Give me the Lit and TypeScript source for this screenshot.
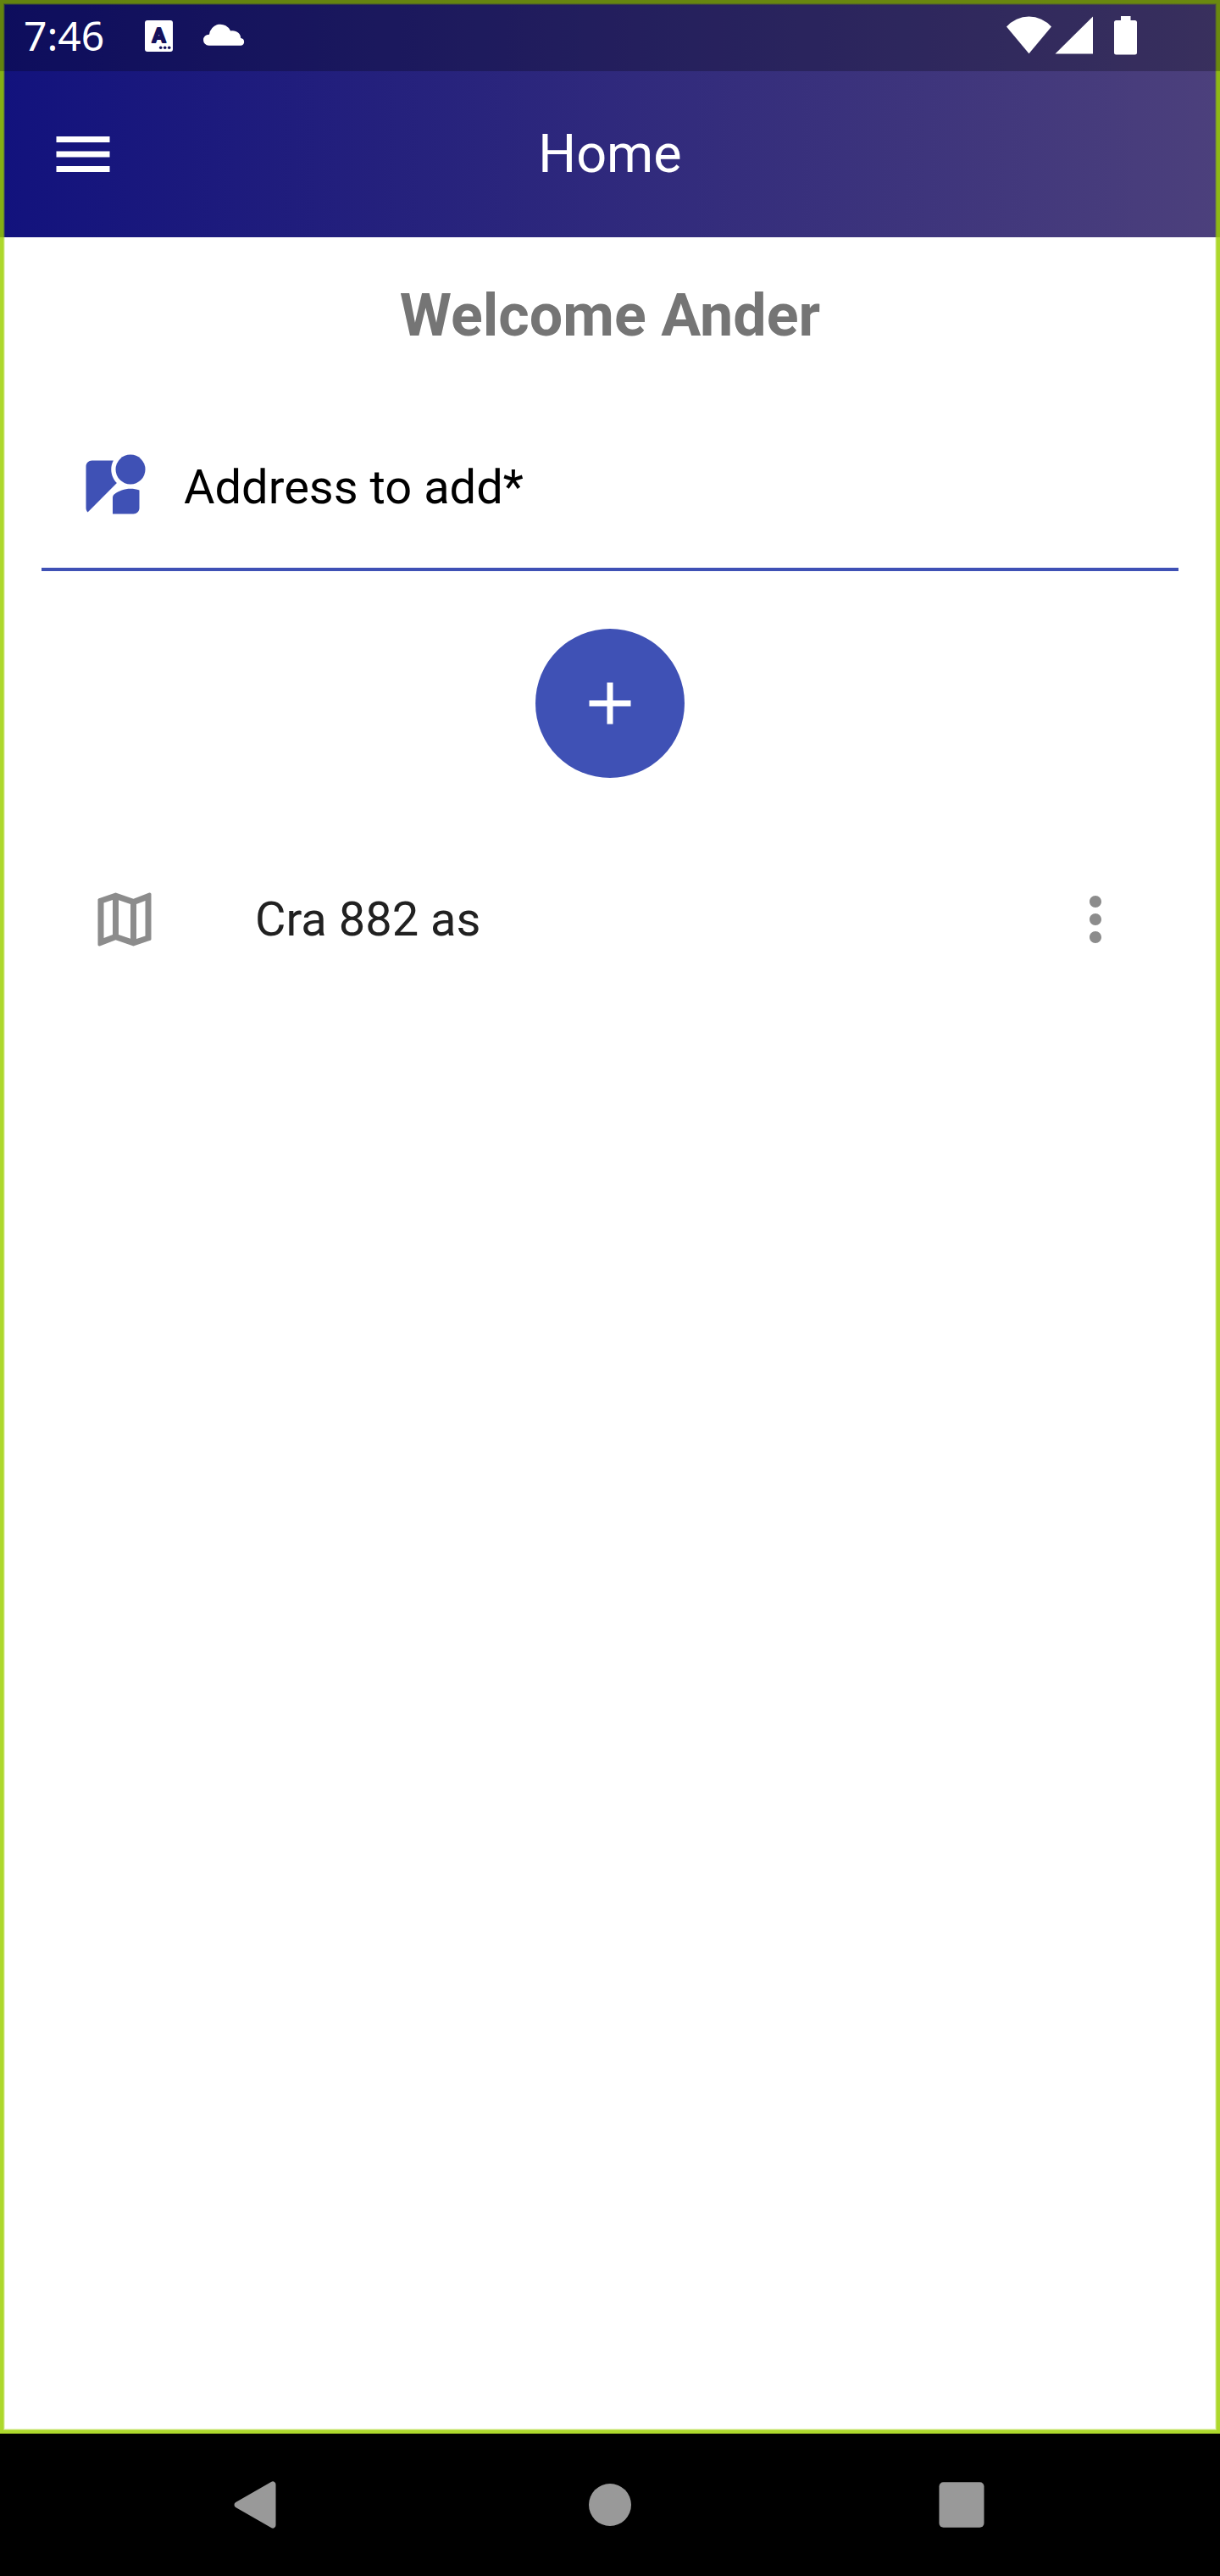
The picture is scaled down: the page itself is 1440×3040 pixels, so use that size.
import { LitElement, html, css, svg } from "lit";
import { customElement, state } from "lit/decorators.js";

const streetview = svg`
  <path d="M12.56 14.33c-.34.27-.56.7-.56 1.17V21h7c1.1 0 2-.9 2-2v-5.98c-.94-.33-1.95-.52-3-.52-2.03 0-3.93.7-5.44 1.83z"/>
  <circle cx="18" cy="6" r="5"/>
  <path d="M11.5 6c0-1.08.27-2.1.74-3H5c-1.1 0-2 .9-2 2v14c0 .55.23 1.05.59 1.41l9.82-9.82C12.23 9.42 11.5 7.8 11.5 6z"/>`;
const mapOutline = svg`<path d="M20.5 3l-.16.03L15 5.1 9 3 3.36 4.9c-.21.07-.36.25-.36.48V20.5c0 .28.22.5.5.5l.16-.03L9 18.9l6 2.1 5.64-1.9c.21-.07.36-.25.36-.48V3.5c0-.28-.22-.5-.5-.5zM10 5.47l4 1.4v11.66l-4-1.4V5.47zm-5 .99l3-1.01v11.7l-3 1.16V6.46zm14 11.08l-3 1.01V6.86l3-1.16v11.84z"/>`;
const moreVert = svg`<path d="M12 8c1.1 0 2-.9 2-2s-.9-2-2-2-2 .9-2 2 .9 2 2 2zm0 2c-1.1 0-2 .9-2 2s.9 2 2 2 2-.9 2-2-.9-2-2-2zm0 6c-1.1 0-2 .9-2 2s.9 2 2 2 2-.9 2-2-.9-2-2-2z"/>`;
const menu = svg`<path d="M3 18h18v-2H3v2zm0-5h18v-2H3v2zm0-7v2h18V6H3z"/>`;
const plus = svg`<path d="M19 13h-6v6h-2v-6H5v-2h6V5h2v6h6v2z"/>`;

@customElement("app-root")
export class AppRoot extends LitElement {
  @state() private addresses = ["Cra 882 as"];

  static styles = css`
    :host {
      display: block;
      font-family: Roboto, "Liberation Sans", sans-serif;
      background: #fff;
    }
    .device {
      display: flex;
      flex-direction: column;
      min-height: 100vh;
    }
    .screen {
      flex: 1;
      display: flex;
      flex-direction: column;
      position: relative;
    }
    .outline {
      position: absolute;
      inset: 0;
      pointer-events: none;
      box-shadow: inset 0 0 0 4px rgba(157, 208, 0, 0.57),
        inset 0 0 0 5px rgba(157, 208, 0, 0.5),
        inset 0 0 0 6px rgba(157, 208, 0, 0.2);
    }
    .top {
      background: linear-gradient(90deg, rgb(18, 18, 125), rgb(76, 64, 124));
      color: #fff;
    }
    .status {
      position: relative;
      z-index: 1;
      display: flex;
      align-items: center;
      height: 84px;
      padding: 0 98px 0 28px;
      box-sizing: border-box;
      background: rgba(0, 0, 0, 0.25);
    }
    .clock {
      font: 48px/56px "Noto Sans", sans-serif;
      margin-right: 47px;
    }
    .notes,
    .signals {
      display: block;
      height: 84px;
      fill: currentColor;
    }
    .notes {
      width: 120px;
      margin-right: auto;
    }
    .signals {
      width: 160px;
    }
    .badge {
      fill: #15125c;
      stroke: #15125c;
      stroke-width: 2;
      stroke-linejoin: round;
      font: 700 24px Roboto, sans-serif;
      text-anchor: middle;
    }
    .dots {
      fill: #15125c;
    }
    .bar {
      display: grid;
      grid-template-columns: 1fr auto 1fr;
      align-items: center;
      height: 196px;
      padding: 0 56px;
    }
    .bar h1 {
      margin: 0;
      font-size: 63px;
      line-height: 84px;
      font-weight: 400;
    }
    button {
      display: flex;
      align-items: center;
      justify-content: center;
      padding: 0;
      border: 0;
      background: none;
      color: inherit;
      cursor: pointer;
    }
    .bar button {
      justify-self: start;
    }
    .icon {
      display: block;
      flex: none;
      width: 84px;
      height: 84px;
      fill: currentColor;
    }
    main {
      display: flex;
      flex-direction: column;
      padding: 50px 49px;
    }
    h2 {
      margin: 0 0 66px;
      font-size: 70px;
      line-height: 84px;
      font-weight: 700;
      text-align: center;
      color: #757575;
    }
    .field {
      display: flex;
      align-items: center;
      gap: 42px;
      height: 190px;
      padding: 0 42px;
      border-bottom: 4px solid #3f51b5;
      color: #3f51b5;
    }
    .field input {
      flex: 1;
      min-width: 0;
      height: 84px;
      padding: 0;
      border: 0;
      outline: none;
      background: none;
      font: 56px/84px Roboto, "Liberation Sans", sans-serif;
      color: #000;
    }
    .field input::placeholder {
      color: #000;
      opacity: 1;
    }
    .add {
      align-self: center;
      width: 176px;
      height: 176px;
      margin: 68px 0 83px;
      border-radius: 50%;
      background: #3f51b5;
      color: #fff;
    }
    ul {
      margin: 0;
      padding: 0;
      list-style: none;
    }
    li {
      display: flex;
      align-items: center;
      height: 168px;
      padding: 0 56px;
      color: #8c8c8c;
    }
    .address {
      flex: 1;
      margin-left: 112px;
      font-size: 56px;
      line-height: 84px;
      color: #212121;
    }
    .nav {
      display: grid;
      grid-template-columns: repeat(3, 1fr);
      justify-items: center;
      align-items: center;
      height: 168px;
      padding: 0 98px;
      background: #000;
      color: #999;
    }
  `;

  private icon(shape: unknown) {
    return html`<svg class="icon" viewBox="0 0 24 24" aria-hidden="true">${shape}</svg>`;
  }

  render() {
    return html`
      <div class="device">
        <div class="screen">
          <header class="top">
            <div class="status">
              <span class="clock">7:46</span>
              <svg class="notes" viewBox="170 0 120 84" aria-hidden="true">
                <rect x="171" y="24" width="33" height="37" rx="3" />
                <text class="badge" x="187.5" y="50">A</text>
                <g class="dots">
                  <circle cx="189.7" cy="56.3" r="1.8" />
                  <circle cx="194.7" cy="56.3" r="1.8" />
                  <circle cx="199.7" cy="56.3" r="1.8" />
                </g>
                <path d="M246.5 53.7a6.5 6.5 0 0 1 0-13h.5a13.2 13.2 0 0 1 25.2-4.2c6.5-1.2 12 3 12 8.500a4.400 4.400 0 0 1 .3 8.700z" />
              </svg>
              <svg class="signals" viewBox="1182 0 160 84" aria-hidden="true">
                <path d="M1214.5 63.3L1188 31.500A35.300 35.300 0 0 1 1241 31.500z" />
                <path d="M1245.500 63.500L1290 19.500V63.500z" />
                <path d="M1323 24v-5h11.500v5h5a2.500 2.500 0 0 1 2.500 2.500v35.500a2.500 2.500 0 0 1-2.500 2.500h-22a2.500 2.500 0 0 1-2.500-2.500v-35.500a2.500 2.500 0 0 1 2.500-2.500z" />
              </svg>
            </div>
            <div class="bar">
              <button aria-label="Menu">${this.icon(menu)}</button>
              <h1>Home</h1>
            </div>
          </header>
          <main>
            <h2>Welcome Ander</h2>
            <label class="field" for="address">
              ${this.icon(streetview)}
              <input id="address" type="text" required placeholder="Address to add*" aria-label="Address to add" />
            </label>
            <button class="add" aria-label="Add address">${this.icon(plus)}</button>
            <ul>
              ${this.addresses.map(
                (a) => html`<li>
                  ${this.icon(mapOutline)}
                  <span class="address">${a}</span>
                  <button aria-label="Options">${this.icon(moreVert)}</button>
                </li>`
              )}
            </ul>
          </main>
          <div class="outline"></div>
        </div>
        <nav class="nav">
          <button aria-label="Back">
            <svg class="icon" viewBox="0 0 84 84" aria-hidden="true">
              <path d="M57.500 14.700a3.500 3.500 0 0 1 5 3.200v48.200a3.500 3.500 0 0 1-5 3.200L15.200 45a3.500 3.500 0 0 1 0-6z" />
            </svg>
          </button>
          <button aria-label="Home">
            <svg class="icon" viewBox="0 0 84 84" aria-hidden="true"><circle cx="42" cy="42" r="25" /></svg>
          </button>
          <button aria-label="Recent apps">
            <svg class="icon" viewBox="0 0 84 84" aria-hidden="true"><rect x="15.500" y="15.300" width="53" height="53.400" rx="5" /></svg>
          </button>
        </nav>
      </div>
    `;
  }
}
